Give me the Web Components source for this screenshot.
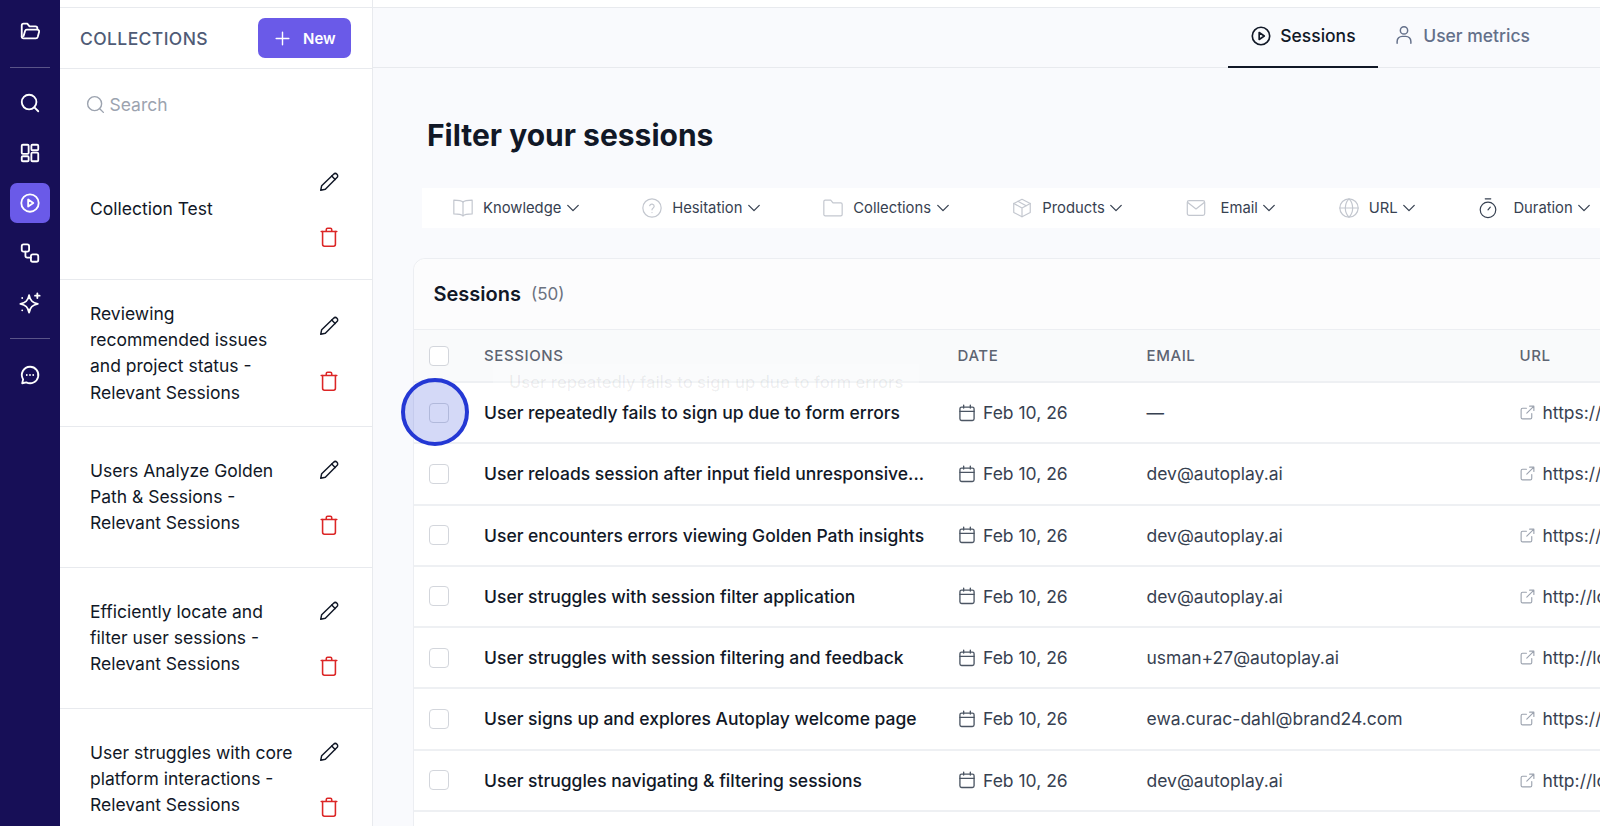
<!DOCTYPE html>
<html>
<head>
<meta charset="utf-8">
<style>
  html, body { margin: 0; height: 100%; overflow: hidden; }
  body { font-family: Inter, "Liberation Sans", sans-serif; color: #111827; background: #f9fafd; }
</style>
</head>
<body>
<app-shell>
  <nav-rail slot="rail"></nav-rail>
  <collections-panel slot="panel">
    <collection-item>Collection Test</collection-item>
    <collection-item>Reviewing recommended issues and project status - Relevant Sessions</collection-item>
    <collection-item>Users Analyze Golden Path &amp; Sessions - Relevant Sessions</collection-item>
    <collection-item>Efficiently locate and filter user sessions - Relevant Sessions</collection-item>
    <collection-item>User struggles with core platform interactions - Relevant Sessions</collection-item>
  </collections-panel>
  <tab-bar slot="tabs"></tab-bar>
  <filter-bar slot="main"></filter-bar>
  <sessions-table slot="main"></sessions-table>
</app-shell>

<script>
const icon = (body, size = 20, sw = 1.6) =>
  `<svg width="${size}" height="${size}" viewBox="0 0 24 24" fill="none" stroke="currentColor" stroke-width="${sw}" stroke-linecap="round" stroke-linejoin="round">${body}</svg>`;

const ICONS = {
  folderOpen: '<path d="M3 18V6a2 2 0 0 1 2-2h4l2.5 3H18a2 2 0 0 1 2 2v1"/><path d="M3 18a2 2 0 0 0 2 2h13.5a2 2 0 0 0 1.9-1.4l1.5-5.6a2 2 0 0 0-1.9-2.5H8.5a2 2 0 0 0-1.9 1.4L5 17.5"/>',
  search: '<circle cx="11" cy="11" r="8"/><path d="m21 21-4.2-4.2"/>',
  dash: '<rect x="3" y="3" width="7.5" height="10" rx="1.2"/><rect x="13.5" y="3" width="7.5" height="6" rx="1.2"/><rect x="13.5" y="11.5" width="7.5" height="9.5" rx="1.2"/><rect x="3" y="15.5" width="7.5" height="5.5" rx="1.2"/>',
  play: '<circle cx="12" cy="12" r="9.5"/><path d="M10 8.2v7.6l5.6-3.8z"/>',
  flow: '<rect x="3" y="2.5" width="8" height="8" rx="2"/><rect x="13" y="13.5" width="8" height="8" rx="2"/><path d="M7 10.5V15a2 2 0 0 0 2 2h4"/>',
  spark: '<path d="M11 3.5c1.1 6 3.5 8.4 9.5 9.5-6 1.1-8.4 3.5-9.5 9.5-1.1-6-3.5-8.4-9.5-9.5 6-1.1 8.4-3.5 9.5-9.5z"/><path d="M20 1.5v5M17.5 4h5"/><path d="M3.5 6.5h.01M3.5 20h.01"/>',
  chat: '<path d="M12 3a9 9 0 1 1-4 17l-4.5 1 1-4.2A9 9 0 0 1 12 3z"/><path d="M8.5 12h.01M12 12h.01M15.5 12h.01"/>',
  plus: '<path d="M12 4v16M4 12h16"/>',
  pencil: '<path d="M17 3.5a2.6 2.6 0 0 1 3.7 3.7L8 20l-5 1 1-5z"/><path d="m15 5.5 3.7 3.7"/>',
  trash: '<path d="M3.5 6h17M9 6V4a1.5 1.5 0 0 1 1.5-1.5h3A1.5 1.5 0 0 1 15 4v2"/><path d="M5 6v14a2 2 0 0 0 2 2h10a2 2 0 0 0 2-2V6"/>',
  user: '<circle cx="12" cy="7" r="4"/><path d="M4.5 21v-2a5.5 5.5 0 0 1 5.5-5.5h4a5.5 5.5 0 0 1 5.5 5.5v2"/>',
  book: '<path d="M12 5.5C10.5 4 8 3.5 2 3.5v15c6 0 8.5.5 10 2 1.5-1.5 4-2 10-2v-15c-6 0-8.5.5-10 2z"/><path d="M12 5.5v15"/>',
  help: '<circle cx="12" cy="12" r="10"/><path d="M9.5 9.5a2.5 2.5 0 0 1 4.9.7c0 1.7-2.4 2.2-2.4 3.8"/><path d="M12 17h.01"/>',
  folder: '<path d="M2 19V5a1.5 1.5 0 0 1 1.5-1.5h6L12 6.5h8.5A1.5 1.5 0 0 1 22 8v11a1.5 1.5 0 0 1-1.5 1.5h-17A1.5 1.5 0 0 1 2 19z"/>',
  box: '<path d="M12 2.5 21 7v10l-9 4.5L3 17V7z"/><path d="M3 7l9 5 9-5M12 12v9.5"/><path d="m7.5 4.7 9 4.8"/>',
  mail: '<rect x="2.5" y="4" width="19" height="16" rx="2"/><path d="m3 6 9 7 9-7"/>',
  globe: '<circle cx="12" cy="12" r="10"/><path d="M2 12h20"/><path d="M12 2c3 3 4 6.5 4 10s-1 7-4 10c-3-3-4-6.5-4-10s1-7 4-10z"/>',
  timer: '<circle cx="12" cy="14" r="8.5"/><path d="M9 2h6M12 14l2.5-3"/>',
  chevron: '<path d="m5 8.5 7 7 7-7"/>',
  calendar: '<rect x="3.5" y="5" width="17" height="16" rx="2"/><path d="M3.5 10h17M8 2.5V6M16 2.5V6"/>',
  external: '<path d="M18 13.5V19a2 2 0 0 1-2 2H5a2 2 0 0 1-2-2V8a2 2 0 0 1 2-2h5.5"/><path d="M15 3h6v6M21 3 11 13"/>'
};

class AppShell extends HTMLElement {
  constructor() {
    super();
    this.attachShadow({ mode: 'open' }).innerHTML = `
      <style>
        :host { display: grid; grid-template-columns: 60px 313px minmax(0, 1fr); grid-template-rows: 68px minmax(0, 1fr); width: 1600px; height: 826px; overflow: hidden; }
        .rail { grid-row: 1 / 3; }
        .panel { grid-row: 1 / 3; min-height: 0; }
        .main { min-width: 0; overflow: hidden; }
      </style>
      <div class="rail"><slot name="rail"></slot></div>
      <div class="panel"><slot name="panel"></slot></div>
      <div class="tabs"><slot name="tabs"></slot></div>
      <div class="main"><slot name="main"></slot></div>`;
  }
}

class NavRail extends HTMLElement {
  constructor() {
    super();
    const btn = (n, on) => `<div class="btn ${on ? 'on' : ''}">${icon(ICONS[n], 22, 2)}</div>`;
    this.attachShadow({ mode: 'open' }).innerHTML = `
      <style>
        :host { display: flex; flex-direction: column; align-items: center; height: 826px; background: #170f57; color: #fff; box-sizing: border-box; padding-top: 11px; }
        .btn { width: 40px; height: 40px; border-radius: 7px; display: flex; align-items: center; justify-content: center; margin-bottom: 10px; }
        .btn.on { background: #6a5ae8; }
        hr { width: 40px; height: 1px; border: 0; background: #5a5488; margin: 6px 0 15px; flex: none; }
      </style>
      ${btn('folderOpen')}<hr>
      ${btn('search')}${btn('dash')}${btn('play', true)}${btn('flow')}${btn('spark')}<hr style="margin-top:5px;margin-bottom:16px">
      ${btn('chat')}`;
  }
}

class CollectionsPanel extends HTMLElement {
  constructor() {
    super();
    this.attachShadow({ mode: 'open' }).innerHTML = `
      <style>
        :host { display: flex; flex-direction: column; height: 826px; overflow: hidden; background: #fff; border-right: 1px solid #e8eaee; box-sizing: border-box; }
        .top { height: 8px; flex: none; border-bottom: 1px solid #e8eaee; box-sizing: border-box; }
        .head { flex: none; height: 61px; box-sizing: border-box; display: flex; align-items: center; justify-content: space-between; padding: 0 21px 0 20px; border-bottom: 1px solid #e8eaee; }
        .title { font-size: 17.5px; font-weight: 500; color: #4f5b76; letter-spacing: .4px; }
        .new { display: flex; align-items: center; gap: 11px; height: 40px; width: 93px; box-sizing: border-box; padding-left: 15px; background: #6a5ae8; color: #fff; border-radius: 7px; font-size: 15px; font-weight: 600; }
        .search { flex: none; display: flex; align-items: center; gap: 3.5px; height: 70px; box-sizing: border-box; padding-left: 25px; color: #9ca3af; font-size: 17.5px; }
        .list { flex: 1; min-height: 0; }
      </style>
      <div class="top"></div>
      <div class="head"><span class="title">COLLECTIONS</span><span class="new">${icon(ICONS.plus, 19, 1.8)}New</span></div>
      <div class="search">${icon(ICONS.search, 21, 1.6)}<span>Search</span></div>
      <div class="list"><slot></slot></div>`;
  }
}

class CollectionItem extends HTMLElement {
  constructor() {
    super();
    this.attachShadow({ mode: 'open' }).innerHTML = `
      <style>
        :host { display: flex; align-items: center; justify-content: space-between; box-sizing: border-box; padding: 20.5px 32px 19.5px 30px; border-bottom: 1px solid #e8eaee; min-height: 141px; }
        .label { width: 206px; font-size: 17.5px; line-height: 26.4px; color: #111827; }
        .acts { display: flex; flex-direction: column; align-items: center; gap: 33px; }
        .edit { color: #111827; display: flex; }
        .del { color: #dc2626; display: flex; }
      </style>
      <div class="label"><slot></slot></div>
      <div class="acts">
        <span class="edit">${icon(ICONS.pencil, 22, 1.6)}</span>
        <span class="del">${icon(ICONS.trash, 22, 1.7)}</span>
      </div>`;
  }
}

class TabBar extends HTMLElement {
  constructor() {
    super();
    this.attachShadow({ mode: 'open' }).innerHTML = `
      <style>
        :host { display: flex; justify-content: flex-end; align-items: stretch; height: 68px; box-sizing: border-box; padding: 8px 70px 0 0; border-bottom: 1px solid #e8eaee; background: linear-gradient(#fff 7px, #e8eaee 7px, #e8eaee 8px, #f9fafd 8px); font-size: 17.5px; }
        .tab { display: flex; align-items: center; gap: 8px; margin-bottom: -1px; padding-bottom: 3px; font-weight: 500; box-sizing: border-box; }
        .on { color: #111827; border-bottom: 2.5px solid #111827; width: 150px; padding-left: 22px; }
        .off { color: #64708a; padding-left: 15px; padding-bottom: 5.5px; }
      </style>
      <span class="tab on">${icon(ICONS.play, 22, 1.8)}Sessions</span>
      <span class="tab off">${icon(ICONS.user, 22, 1.6)}User metrics</span>`;
  }
}

class FilterBar extends HTMLElement {
  constructor() {
    super();
    const item = (n, label, gap = 9, cls = '') =>
      `<span class="f"><span class="i ${cls}">${icon(ICONS[n], 22, 1.3)}</span><span class="t" style="margin-left:${gap}px">${label}</span><span class="c">${icon(ICONS.chevron, 18, 1.7)}</span></span>`;
    this.attachShadow({ mode: 'open' }).innerHTML = `
      <style>
        :host { display: flex; gap: 59.3px; align-items: center; height: 40px; width: 1300px; margin: 120px 0 30px 49px; background: #fff; padding: 0 0 0 30px; box-sizing: border-box; position: relative; white-space: nowrap; font-size: 14.8px; color: #374151; }
        h1 { position: absolute; left: 5px; top: -71px; margin: 0; font-size: 30px; font-weight: 700; color: #111827; line-height: 36px; }
        .f { display: flex; align-items: center; flex: none; }
        .i { display: flex; color: #c3c7cf; }
        .i.dark { color: #374151; }
        .c { display: flex; color: #374151; margin-left: 2.5px; }
      </style>
      <h1>Filter your sessions</h1>
      ${item('book', 'Knowledge')}${item('help', 'Hesitation')}${item('folder', 'Collections')}${item('box', 'Products', 9.5)}${item('mail', 'Email', 14)}${item('globe', 'URL')}${item('timer', 'Duration', 14, 'dark')}`;
  }
}

class SessionsTable extends HTMLElement {
  constructor() {
    super();
    const rows = [
      ['User repeatedly fails to sign up due to form errors', '—', 'https://app.autoplay.ai'],
      ['User reloads session after input field unresponsive...', 'dev@autoplay.ai', 'https://app.autoplay.ai'],
      ['User encounters errors viewing Golden Path insights', 'dev@autoplay.ai', 'https://app.autoplay.ai'],
      ['User struggles with session filter application', 'dev@autoplay.ai', 'http://localhost:3000'],
      ['User struggles with session filtering and feedback', 'usman+27@autoplay.ai', 'http://localhost:3000'],
      ['User signs up and explores Autoplay welcome page', 'ewa.curac-dahl@brand24.com', 'https://app.autoplay.ai'],
      ['User struggles navigating & filtering sessions', 'dev@autoplay.ai', 'http://localhost:3000']
    ];
    const html = rows.map(r => `
      <div class="row">
        <span class="cb"></span>
        <span class="name">${r[0].replace('&', '&amp;')}</span>
        <span class="date">${icon(ICONS.calendar, 20, 1.6)}Feb 10, 26</span>
        <span class="mail">${r[1]}</span>
        <span class="url"><span class="ext">${icon(ICONS.external, 17, 1.6)}</span>${r[2]}</span>
      </div>`).join('');
    this.attachShadow({ mode: 'open' }).innerHTML = `
      <style>
        :host { display: block; position: relative; margin-left: 40px; width: 1300px; height: 600px; background: #fff; border: 1px solid #eceef2; border-radius: 12px; box-sizing: border-box; font-size: 17.5px; }
        .title { height: 71px; display: flex; align-items: center; gap: 10px; padding-left: 19.5px; box-sizing: border-box; font-size: 20px; font-weight: 600; color: #111827; background: #fcfcfd; border-radius: 12px 12px 0 0; border-bottom: 1px solid #eceef2; }
        .title small { font-size: 17px; font-weight: 400; color: #6b7280; }
        .row, .hd { display: grid; grid-template-columns: 55px 473.5px 189px 373px 1fr; align-items: center; white-space: nowrap; padding-left: 15px; box-sizing: border-box; }
        .hd { height: 53px; background: #f9fafb; border-bottom: 2px solid #eef0f3; font-size: 15px; font-weight: 500; letter-spacing: .6px; color: #5d6472; }
        .row { height: 61.25px; border-bottom: 2px solid #eef0f3; background: #fff; color: #374151; }
        .row:first-of-type { background: #fcfcfd; }
        .cb { width: 20px; height: 20px; border: 1px solid #d3d6dc; border-radius: 4px; box-sizing: border-box; background: #fff; }
        .name { font-weight: 500; color: #111827; }
        .date, .url { display: flex; align-items: center; }
        .date { gap: 6.5px; }
        .url { gap: 7px; }
        .date svg { color: #4b5563; margin-left: -1px; }
        .ext { display: flex; color: #9ca3af; margin-left: -1px; }
        .ghost { position: absolute; left: 79px; top: 105px; padding: 6px 16px; background: rgba(255,255,255,.25); color: rgba(17,24,39,.07); font-size: 16.6px; font-weight: 500; white-space: nowrap; line-height: 24px; }
        .spot { position: absolute; left: -13px; top: 119px; width: 68px; height: 68px; border-radius: 50%; box-sizing: border-box; border: 4px solid #2438d4; background: rgba(60,80,220,.22); }
      </style>
      <div class="title">Sessions <small>(50)</small></div>
      <div class="hd"><span class="cb"></span><span>SESSIONS</span><span>DATE</span><span>EMAIL</span><span>URL</span></div>
      ${html}
      <div class="ghost">User repeatedly fails to sign up due to form errors</div>
      <div class="spot"></div>`;
  }
}

customElements.define('app-shell', AppShell);
customElements.define('nav-rail', NavRail);
customElements.define('collections-panel', CollectionsPanel);
customElements.define('collection-item', CollectionItem);
customElements.define('tab-bar', TabBar);
customElements.define('filter-bar', FilterBar);
customElements.define('sessions-table', SessionsTable);
</script>
</body>
</html>
